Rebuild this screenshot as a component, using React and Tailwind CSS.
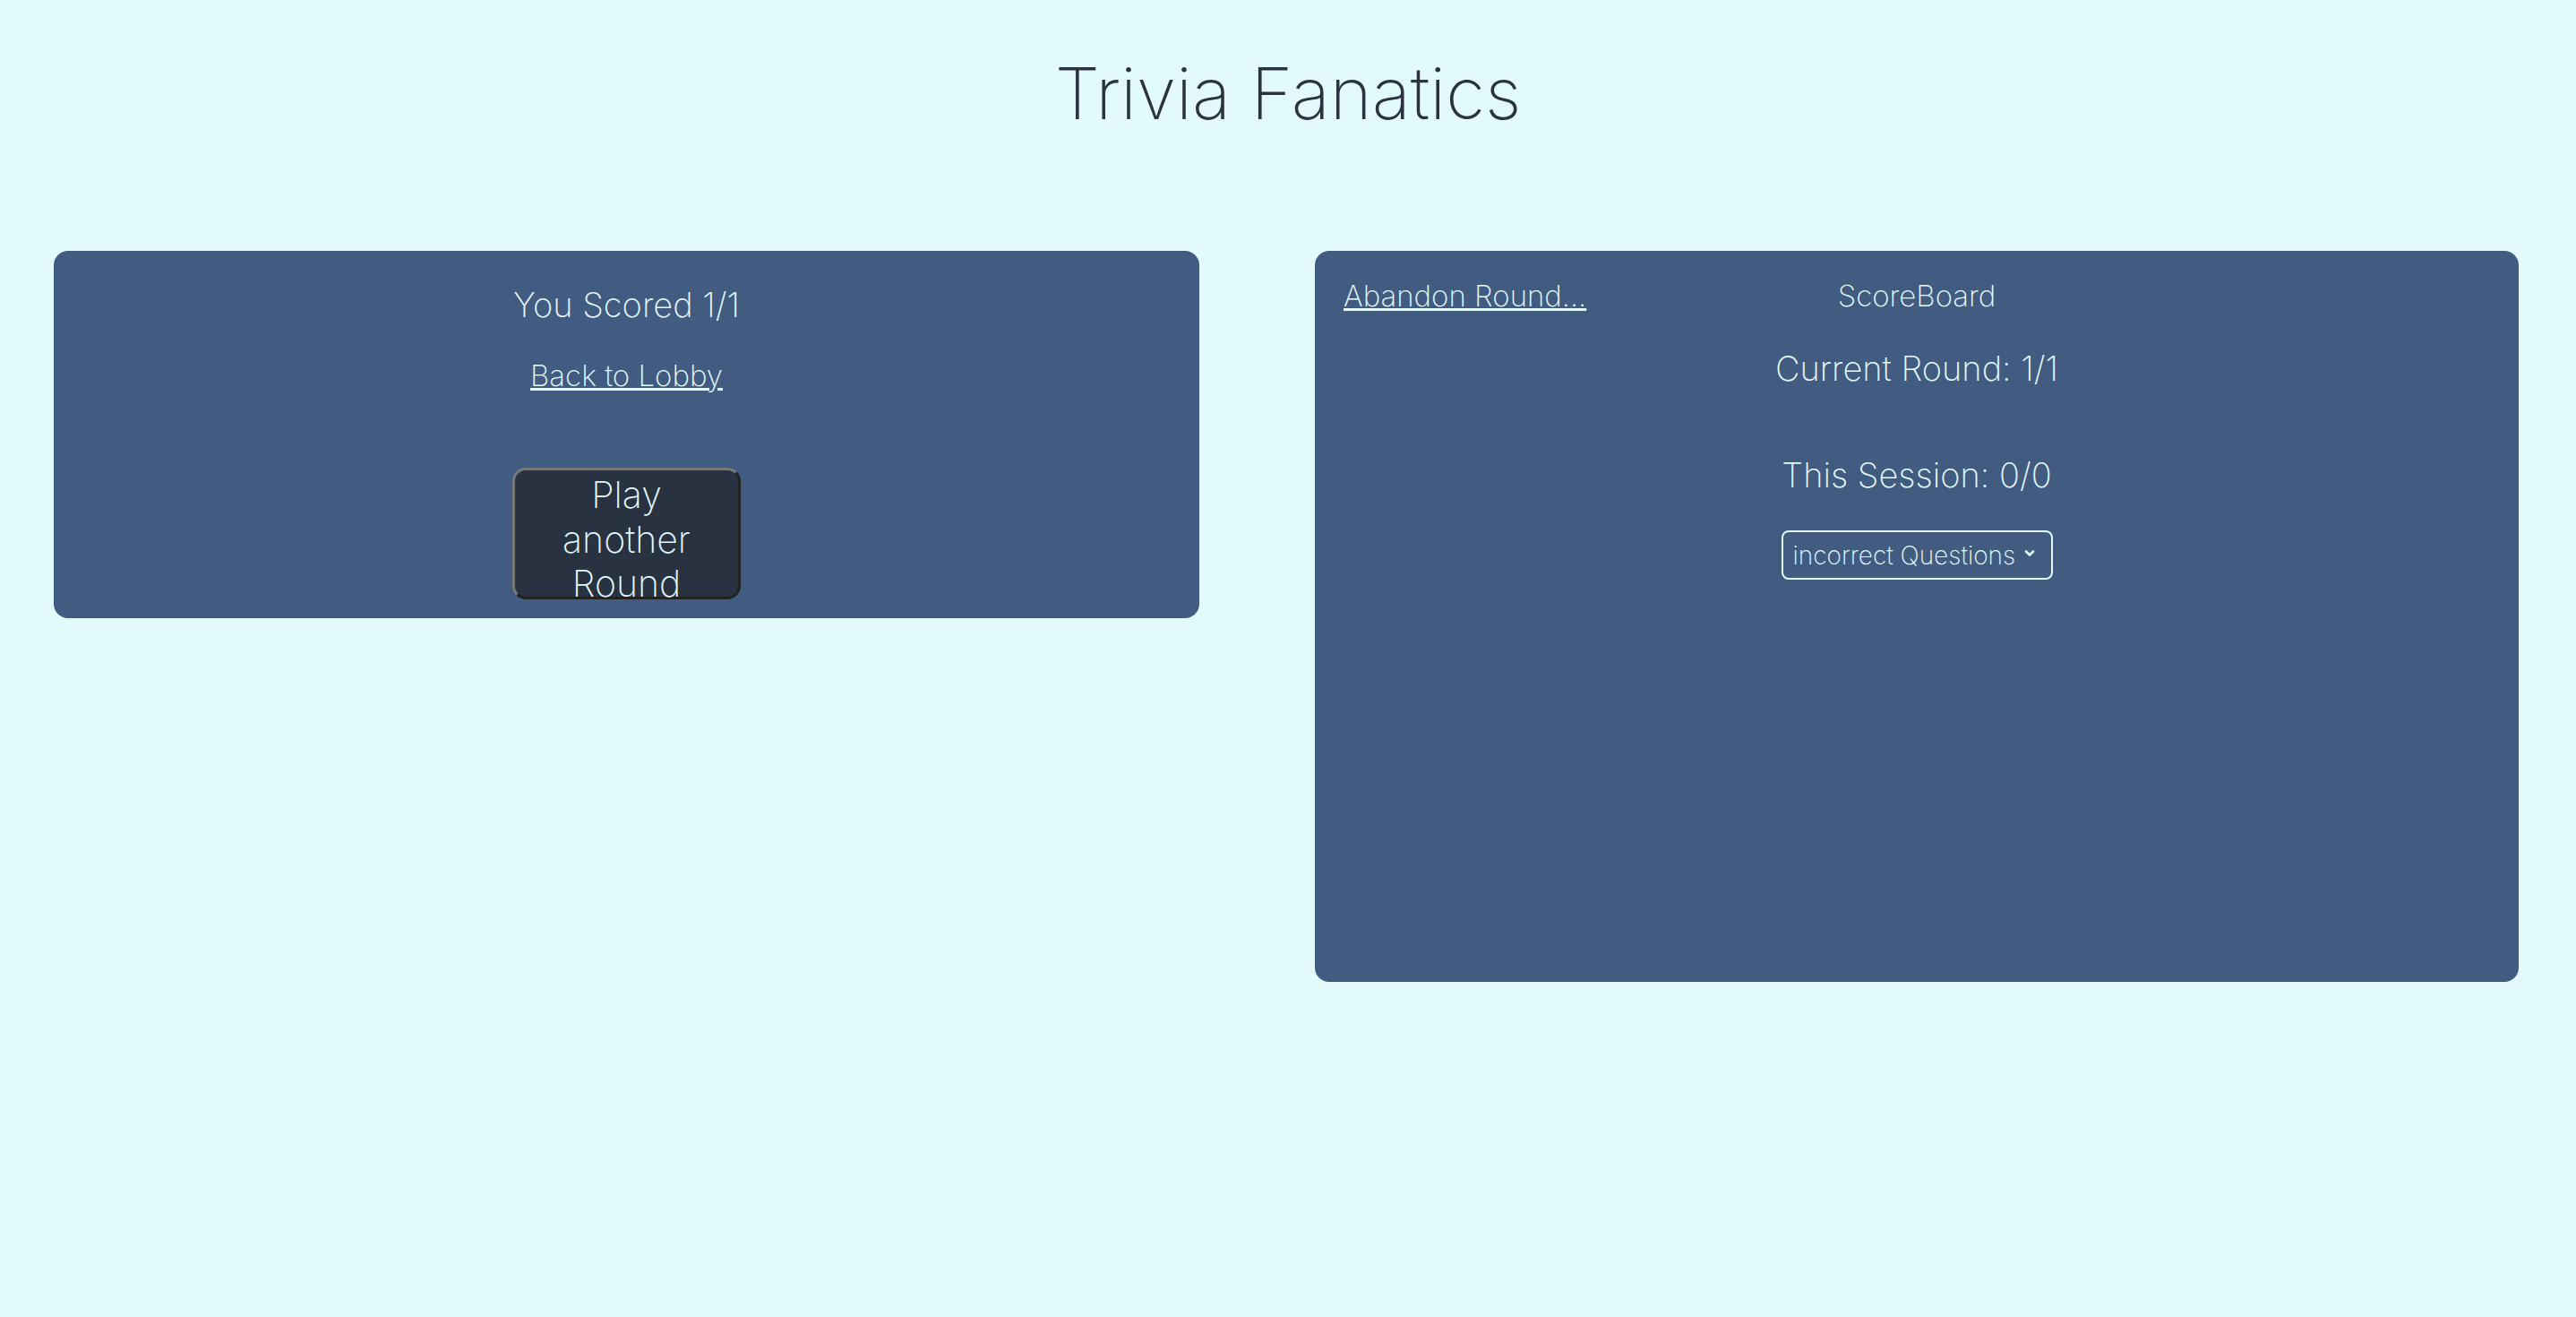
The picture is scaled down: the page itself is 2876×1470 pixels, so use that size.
import React from "react";

export default function App() {
  return (
    <div className="min-h-screen bg-[#e3fafc] font-['Inter',sans-serif] font-extralight">
      <h1 className="text-center text-[80px] leading-[80px] pt-[64px] text-[#2b3340]">Trivia Fanatics</h1>

      <div className="flex items-start gap-[129px] pl-[60px] mt-[136px]">
        {/* result card */}
        <div className="w-[1279px] h-[410px] rounded-2xl bg-[#425b80] flex flex-col items-center text-[#e3fafc]">
          <p className="mt-[36px] text-[38px] leading-[48px]">You Scored 1/1</p>
          <a href="#" className="mt-[35px] text-[33px] leading-[40px] underline">Back to Lobby</a>
          <button className="mt-[83px] w-[255px] h-[147px] pt-[3px] flex flex-col items-center justify-start rounded-[15px] border-[3px] border-t-[#777] border-l-[#777] border-b-[#222] border-r-[#222] bg-[#293241] text-[41px] leading-[49.5px] text-[#e3fafc]">
            <span>Play</span>
            <span>another</span>
            <span>Round</span>
          </button>
        </div>

        {/* scoreboard card */}
        <div className="w-[1344px] h-[816px] rounded-2xl bg-[#425b80] flex flex-col items-center text-[#e3fafc]">
          <div className="w-full grid grid-cols-3 mt-[30px] text-[33px] leading-[40px]">
            <a href="#" className="pl-[32px] underline whitespace-nowrap">Abandon Round...</a>
            <span className="text-center">ScoreBoard</span>
          </div>
          <p className="mt-[39px] text-[38px] leading-[44px]">Current Round: 1/1</p>
          <p className="mt-[75px] text-[38px] leading-[44px]">This Session: 0/0</p>
          <button className="mt-[40px] w-[303px] h-[55px] pl-[11px] rounded-lg border-2 border-[#e3fafc] flex items-center gap-[10px] text-[28px] leading-[34px]">
            incorrect Questions
            <svg className="-mt-[4px]" width="12" height="9" viewBox="0 0 12 9" fill="none" stroke="currentColor" strokeWidth="2.6" strokeLinecap="round" strokeLinejoin="round">
              <path d="M2 2.5l4 4 4-4" />
            </svg>
          </button>
        </div>
      </div>
    </div>
  );
}
